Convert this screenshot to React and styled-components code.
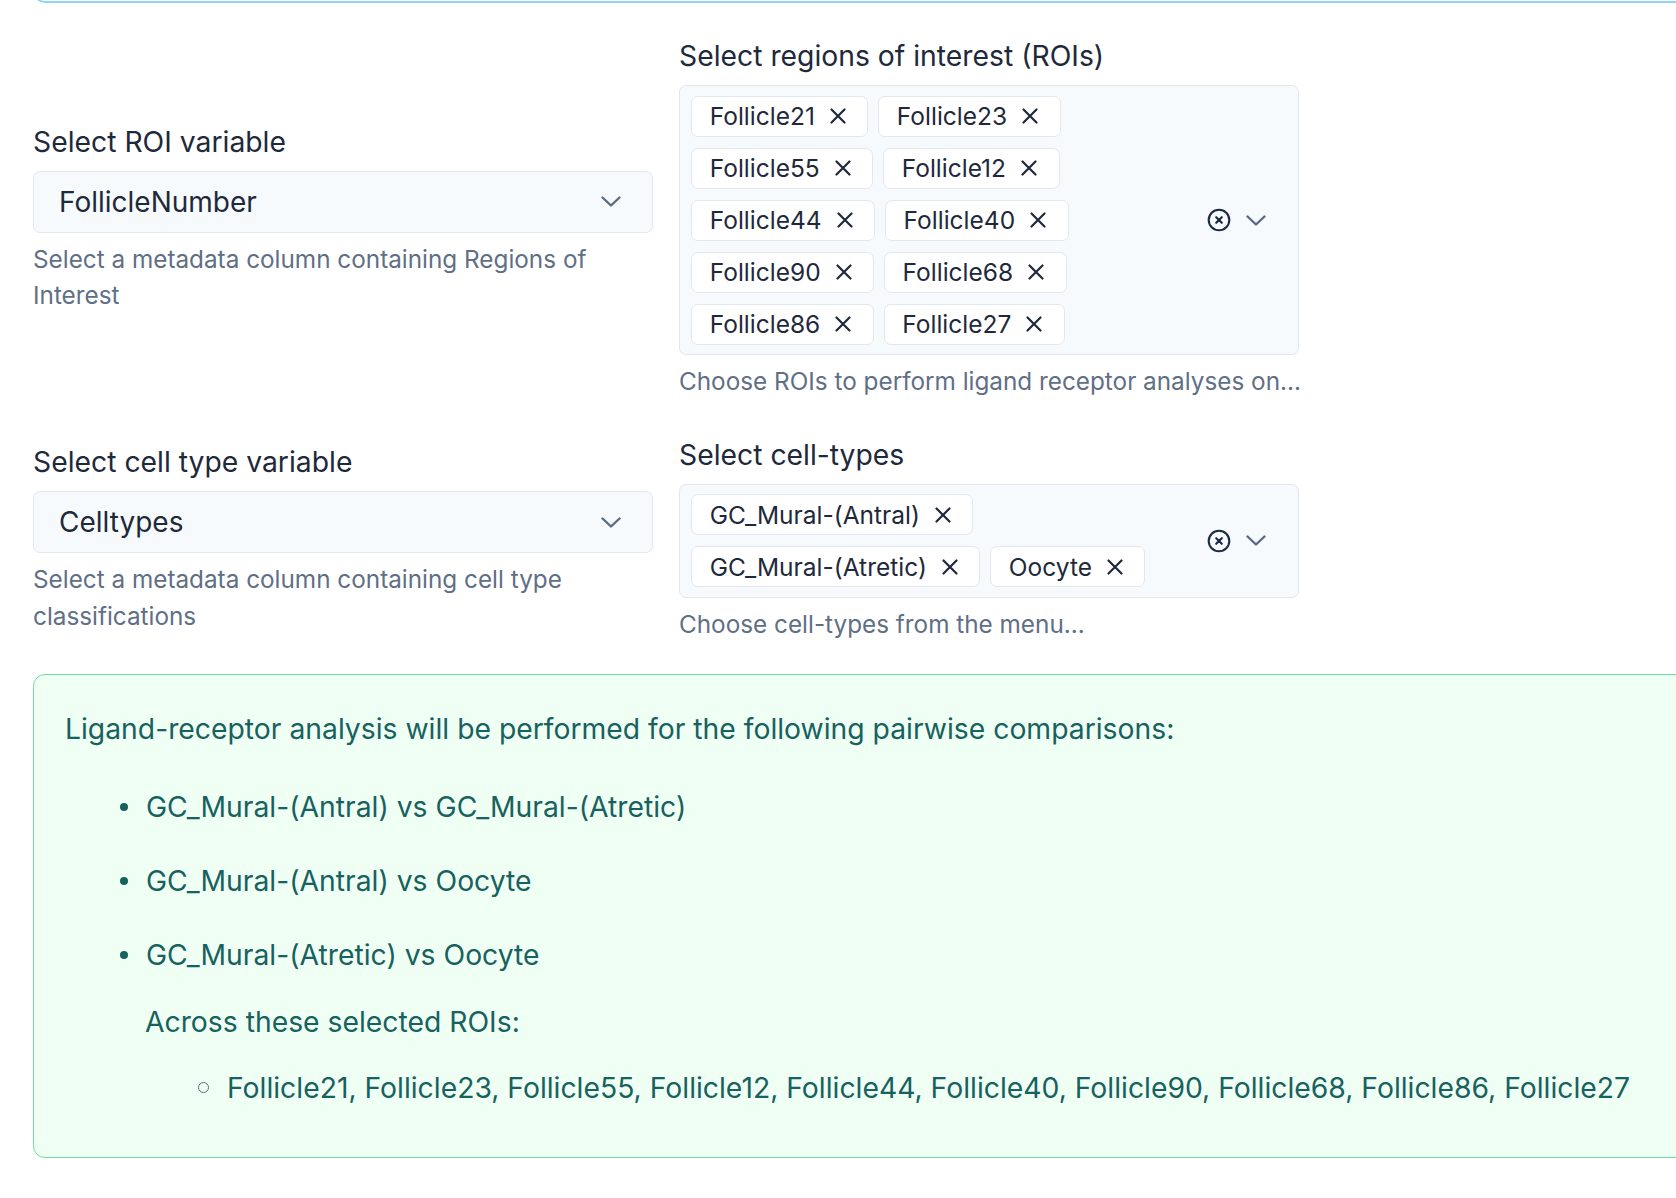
import React from 'react';
import styled, { createGlobalStyle } from 'styled-components';

const GlobalStyle = createGlobalStyle`
  html, body {
    margin: 0;
    padding: 0;
    background: #ffffff;
    overflow: hidden;
  }
  body {
    font-family: Inter, "Noto Sans", "Liberation Sans", sans-serif;
    color: #1e293b;
  }
  * {
    box-sizing: border-box;
  }
`;

const Page = styled.div`
  width: 1676px;
  height: 1198px;
  padding-left: 33px;
  overflow: hidden;
`;

const PrevCardEdge = styled.div`
  width: 1700px;
  height: 22px;
  margin-top: -19px;
  border: 2px solid #90d4f6;
  border-top: none;
  border-radius: 0 0 12px 12px;
`;

const FormGrid = styled.div`
  display: grid;
  grid-template-columns: 620px 620px;
  column-gap: 26px;
  row-gap: 34px;
  align-items: center;
  margin-top: 32px;
`;

const Field = styled.div`
  display: flex;
  flex-direction: column;
`;

const Label = styled.label`
  font-size: 28.3px;
  line-height: 42px;
  color: #1e293b;
  margin-bottom: 8px;
`;

const SelectBox = styled.div`
  display: flex;
  align-items: center;
  justify-content: space-between;
  height: 62px;
  padding: 0 31px 0 25px;
  background: #f7fafc;
  border: 1.75px solid #e2e8f0;
  border-radius: 7px;
`;

const SelectValue = styled.span`
  font-size: 28px;
  color: #1e293b;
`;

const HelpText = styled.div`
  margin-top: 8px;
  font-size: 24.3px;
  line-height: 36.75px;
  color: #5f6f86;
  white-space: ${({ $nowrap }) => ($nowrap ? 'nowrap' : 'normal')};
`;

const MultiBox = styled.div`
  display: flex;
  align-items: center;
  padding: 9.5px 32px 9.5px 11.25px;
  background: #f7fafc;
  border: 1.75px solid #e2e8f0;
  border-radius: 7px;
`;

const TagList = styled.div`
  flex: 1;
  display: flex;
  flex-wrap: wrap;
  gap: 11px 10px;
`;

const Tag = styled.span`
  display: inline-flex;
  align-items: center;
  height: 41px;
  padding: 0 15.5px 0 17.5px;
  background: #ffffff;
  border: 1.75px solid #e2e8f0;
  border-radius: 7px;
  font-size: 24.5px;
  color: #1e293b;
`;

const TagClose = styled.span`
  display: inline-flex;
  align-items: center;
  justify-content: center;
  width: 28px;
  height: 28px;
  margin-left: 9px;
`;

const Indicators = styled.div`
  display: flex;
  align-items: center;
  gap: 15px;
`;

const SummaryBox = styled.div`
  width: 1700px;
  margin-top: 31px;
  padding: 33px 0 48px 31px;
  background: #f0fff4;
  border: 1.75px solid #6fdca0;
  border-radius: 12px;
  color: #17625f;
  font-size: 28.3px;
  line-height: 42px;
`;

const Intro = styled.p`
  margin: 0;
`;

const PairList = styled.ul`
  list-style: none;
  margin: 36px 0 0;
  padding: 0 0 0 81px;
  display: flex;
  flex-direction: column;
  gap: 32px;
`;

const PairItem = styled.li`
  display: flex;
  align-items: center;

  &::before {
    content: '';
    flex: none;
    width: 8px;
    height: 8px;
    border-radius: 50%;
    background: #17625f;
    margin: 0 18px 0 -26px;
  }
`;

const Across = styled.p`
  margin: 25px 0 0 80px;
`;

const RoiList = styled.ul`
  list-style: none;
  margin: 24px 0 0;
  padding: 0 0 0 160px;
`;

const RoiItem = styled.li`
  display: flex;
  align-items: center;

  &::before {
    content: '';
    flex: none;
    width: 9px;
    height: 9px;
    border-radius: 50%;
    border: 1.5px solid #4c7474;
    margin: 0 18px 0 -27px;
  }
`;

const Chevron = () => (
  <svg width="20" height="11" viewBox="0 0 20 11" fill="none">
    <path d="M1.5 1.5 L10 9.5 L18.5 1.5" stroke="#5b6b82" strokeWidth="2.4" strokeLinecap="round" strokeLinejoin="round" />
  </svg>
);

const ClearIcon = () => (
  <svg width="24" height="24" viewBox="0 0 24 24" fill="none">
    <circle cx="12" cy="12" r="10.3" stroke="#1e2a44" strokeWidth="2.1" />
    <path d="M9.2 9.2 L14.8 14.8 M14.8 9.2 L9.2 14.8" stroke="#1e2a44" strokeWidth="2.1" strokeLinecap="round" />
  </svg>
);

const CloseX = () => (
  <svg width="16" height="16" viewBox="0 0 16 16" fill="none">
    <path d="M1.5 1.5 L14.5 14.5 M14.5 1.5 L1.5 14.5" stroke="#1e293b" strokeWidth="2.2" strokeLinecap="round" />
  </svg>
);

const rois = [
  'Follicle21', 'Follicle23', 'Follicle55', 'Follicle12', 'Follicle44',
  'Follicle40', 'Follicle90', 'Follicle68', 'Follicle86', 'Follicle27',
];

const cellTypes = ['GC_Mural-(Antral)', 'GC_Mural-(Atretic)', 'Oocyte'];

function MultiSelect({ values }) {
  return (
    <MultiBox>
      <TagList>
        {values.map((v) => (
          <Tag key={v}>
            {v}
            <TagClose>
              <CloseX />
            </TagClose>
          </Tag>
        ))}
      </TagList>
      <Indicators>
        <ClearIcon />
        <Chevron />
      </Indicators>
    </MultiBox>
  );
}

function App() {
  const pairs = [];
  for (let i = 0; i < cellTypes.length; i++) {
    for (let j = i + 1; j < cellTypes.length; j++) {
      pairs.push(`${cellTypes[i]} vs ${cellTypes[j]}`);
    }
  }

  return (
    <>
      <GlobalStyle />
      <Page>
        <PrevCardEdge />
        <FormGrid>
          <Field>
            <Label>Select ROI variable</Label>
            <SelectBox>
              <SelectValue>FollicleNumber</SelectValue>
              <Chevron />
            </SelectBox>
            <HelpText>Select a metadata column containing Regions of Interest</HelpText>
          </Field>
          <Field>
            <Label>Select regions of interest (ROIs)</Label>
            <MultiSelect values={rois} />
            <HelpText $nowrap>Choose ROIs to perform ligand receptor analyses on...</HelpText>
          </Field>
          <Field>
            <Label>Select cell type variable</Label>
            <SelectBox>
              <SelectValue>Celltypes</SelectValue>
              <Chevron />
            </SelectBox>
            <HelpText>Select a metadata column containing cell type classifications</HelpText>
          </Field>
          <Field>
            <Label>Select cell-types</Label>
            <MultiSelect values={cellTypes} />
            <HelpText>Choose cell-types from the menu...</HelpText>
          </Field>
        </FormGrid>
        <SummaryBox>
          <Intro>Ligand-receptor analysis will be performed for the following pairwise comparisons:</Intro>
          <PairList>
            {pairs.map((p) => (
              <PairItem key={p}>{p}</PairItem>
            ))}
          </PairList>
          <Across>Across these selected ROIs:</Across>
          <RoiList>
            <RoiItem>{rois.join(', ')}</RoiItem>
          </RoiList>
        </SummaryBox>
      </Page>
    </>
  );
}

export default App;
